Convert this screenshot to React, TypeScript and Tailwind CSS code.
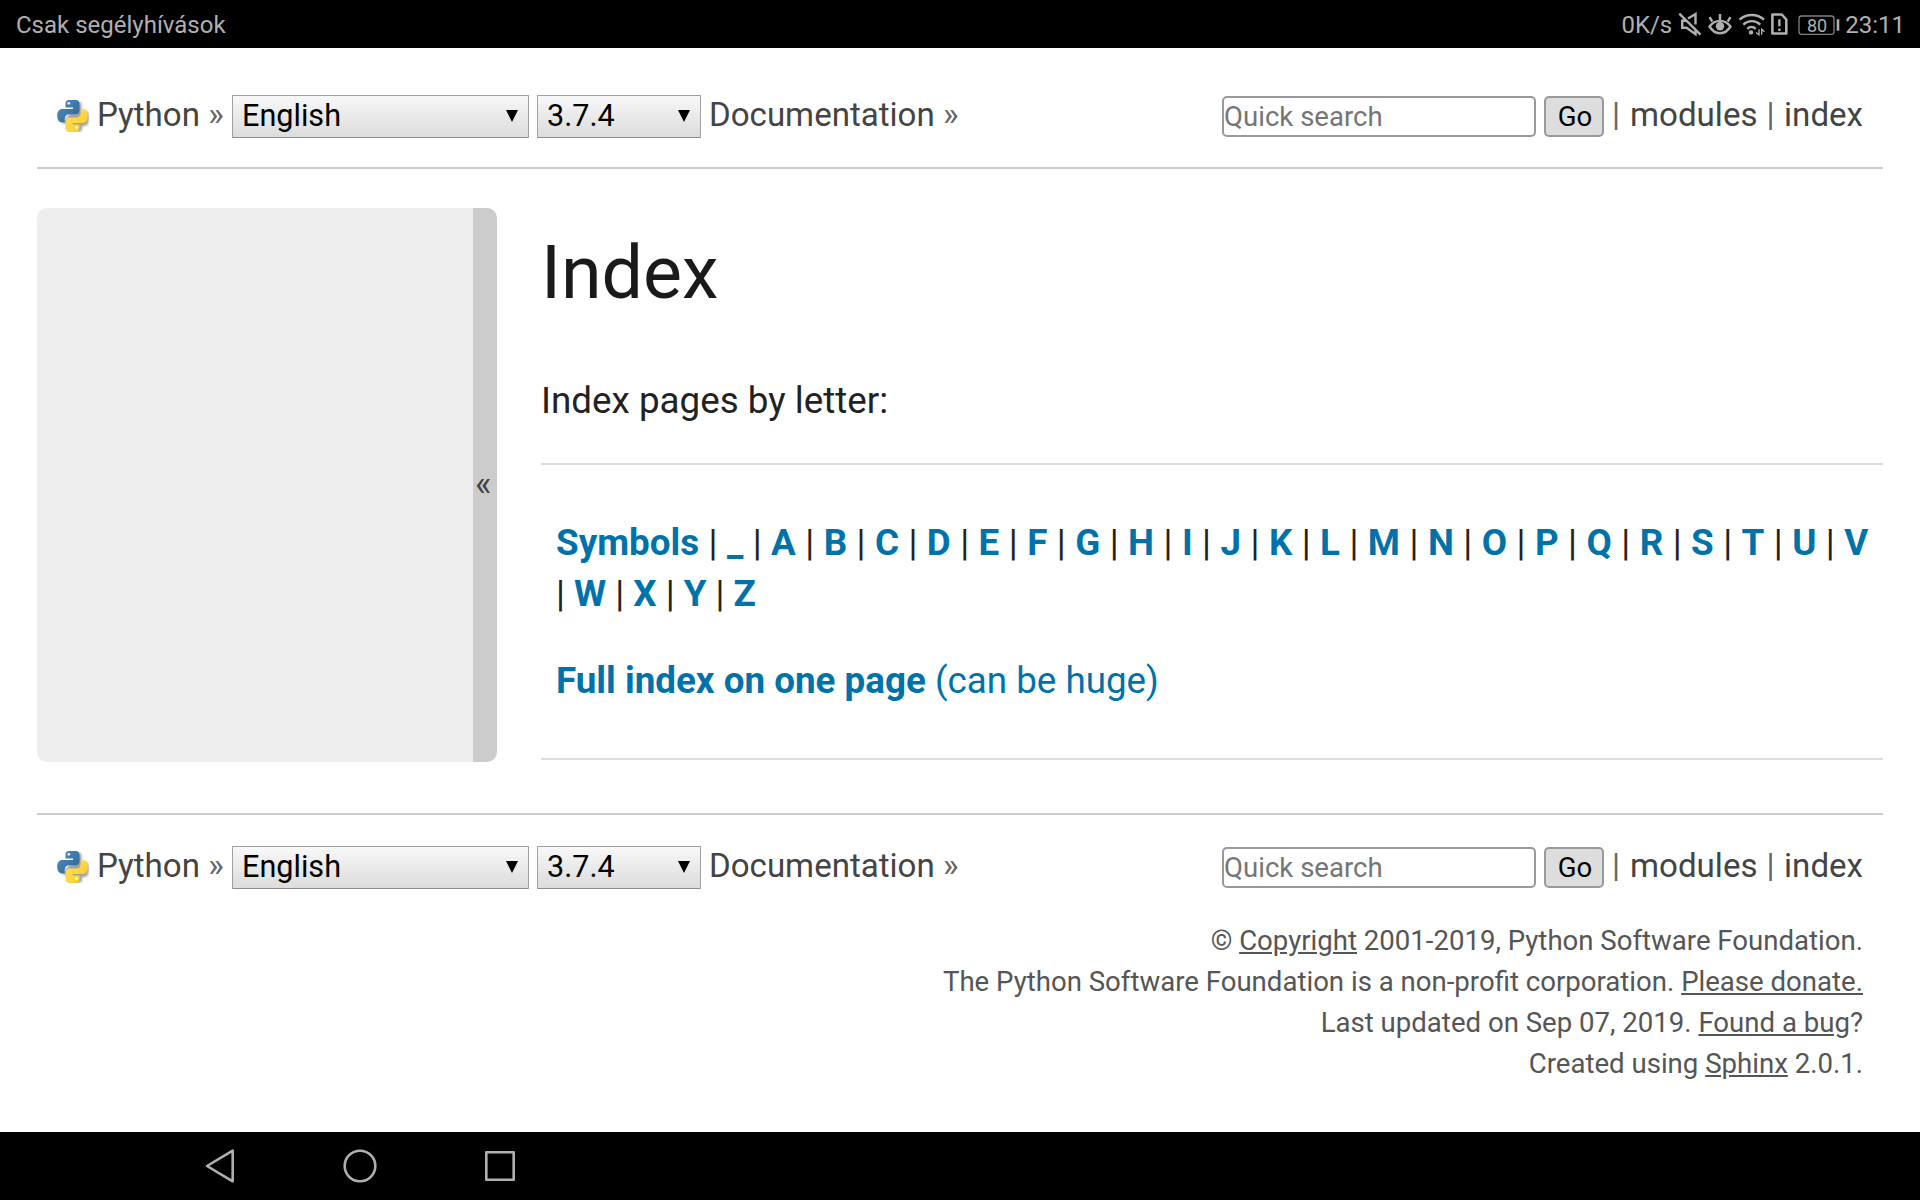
import React from 'react';

const letters = 'ABCDEFGHIJKLMNOPQRSTUVWXYZ'.split('');

function PythonLogo({ id }: { id: string }) {
  return (
    <svg width="32" height="32" viewBox="-0.500 0 32 32" className="block">
      <defs>
        <linearGradient id={id + 'b'} x1="0" y1="0" x2="1" y2="1">
          <stop offset="0" stopColor="#4f90c5" />
          <stop offset="1" stopColor="#2f6391" />
        </linearGradient>
        <linearGradient id={id + 'y'} x1="0" y1="0" x2="1" y2="1">
          <stop offset="0" stopColor="#ffe262" />
          <stop offset="1" stopColor="#fcca1c" />
        </linearGradient>
        <filter id={id + 's'} x="-20%" y="-20%" width="140%" height="140%">
          <feGaussianBlur stdDeviation="1.2" />
        </filter>
      </defs>
      <path d="M22 1.500c1.500 1 2 2 2 4v5h2c4.500 0 5.500 3 5.500 7.500 0 5-1.500 8-5 8h-2v3.500c0 2-3 3-7.500 3s-8-1.500-8-4v-5H4z" fill="#666" opacity=".6" filter={'url(#' + id + 's)'} />
      <path d="M15 -.5c-5 0-7 1.300-7 4V7.500h7.500V9H5C1.500 9-.3 11.500-.3 15.500S1.500 22.500 4.500 22.500h2.700v-3.600c0-2.800 2-4.600 4.500-4.600h6.500c2.200 0 3.800-1.700 3.800-3.900V3.500c0-2.700-2.500-4-7-4z" fill={'url(#' + id + 'b)'} />
      <path d="M15.500 32c4.500 0 6.500-1.300 6.500-4v-3.500h-6.700V23H25c3.500 0 5.300-2.500 5.300-6.800 0-4-1.500-6.700-4.500-6.700h-2.600V13c0 2.800-2 4.600-4.500 4.600h-6.500c-2.200 0-3.800 1.700-3.800 3.900V28c0 2.700 2.600 4 7.100 4z" fill={'url(#' + id + 'y)'} />
      <circle cx="11.300" cy="3.300" r="1.400" fill="#e8f1f8" />
      <circle cx="19" cy="27.500" r="1.500" fill="#fff7d0" />
    </svg>
  );
}

function Select({ label, className }: { label: string; className: string }) {
  return (
    <div className={'flex h-[43px] items-center justify-between rounded-[1px] border border-[#a0a0a0] border-b-[#8c8c8c] bg-linear-to-b from-[#f8f8f8] to-[#dcdcdc] pl-[9px] text-[30.600px] leading-[41px] text-black ' + className}>
      <span className="pb-[2px]">{label}</span>
      <svg width="12" height="12" viewBox="0 0 12 12" className="mr-[10px] mb-px">
        <path d="M0 0h12L6 12z" fill="#000" />
      </svg>
    </div>
  );
}

function NavRow({ id }: { id: string }) {
  return (
    <div className="flex h-[43px] items-center justify-between pr-5 pl-5 text-[33.100px] leading-[43px] whitespace-nowrap text-[#444]">
      <div className="flex h-[43px]">
        <div className="mt-[5px] w-[40px] shrink-0"><PythonLogo id={id} /></div>
        <div className="-mt-[2px] w-[135px]">Python <span className="text-[#666]">»</span></div>
        <Select label="English" className="w-[297px]" />
        <Select label="3.7.4" className="ml-2 w-[164px]" />
        <div className="-mt-[2px] ml-2">Documentation <span className="text-[#666]">»</span></div>
      </div>
      <div className="flex h-[43px]">
        <input placeholder="Quick search" className="mt-px h-[41px] w-[314px] rounded-[5px] border-2 border-[#999] bg-white p-0 text-[27.550px] text-black placeholder:text-[#757575] placeholder:opacity-100" />
        <button className="mt-px ml-2 h-[41px] w-[60px] rounded-[5px] border-2 border-[#999] bg-[#ddd] pl-[2px] text-[27.550px] leading-[37px] text-black">Go</button>
        <div className="-mt-[2px] ml-2 flex">
          <span className="w-[18px] text-[#666]">|</span>
          <span>modules</span>
          <span className="mr-[9.500px] ml-[9px] text-[#666]">|</span>
          <span>index</span>
        </div>
      </div>
    </div>
  );
}

function StatusBar() {
  return (
    <header className="flex h-12 items-center justify-between bg-black px-4 pt-px text-[24px] leading-[48px] text-[#b0b0b0]">
      <span>Csak segélyhívások</span>
      <div className="flex items-center">
        <span>0K/s</span>
        <svg width="232" height="48" viewBox="1672 0 232 48" className="-mt-px -mr-[59px] h-12 w-[232px]" fill="none" stroke="#b0b0b0" strokeWidth="2.400">
          <path d="M1679.300 13.600l21.200 21M1688 18.500l7.500-4.500v10.500M1695.500 30.500v3.700l-9-6.400h-4.300v-7h3.500" />
          <path d="M1709.500 26.500c5.500-7.500 15.500-7.500 21 0-5.500 9-15.500 9-21 0zM1720 20v-6M1712.300 21.500l-2.800-4.300M1727.700 21.500l2.800-4.300" />
          <circle cx="1720" cy="26.300" r="4.200" fill="#b0b0b0" stroke="none" />
          <path d="M1739.500 19.700c7-6.300 17.500-6.300 24.500 0M1743.300 24.600c5-4.600 12-4.600 17 0M1747.300 28.800c2.500-2.500 6-2.500 8.500 0" />
          <circle cx="1751" cy="32.400" r="2.200" fill="#b0b0b0" stroke="none" />
          <path d="M1759 29.300v5.500l-3-2.300M1761.700 34.800v-5.500l2.800 2.500" strokeWidth="1.400" />
          <path d="M1772.400 14.500h9.400l4.500 5V33.500h-13.900z" strokeLinejoin="round" strokeWidth="2.600" />
          <path d="M1779.400 19.300v7M1779.400 28.500v2.600" strokeWidth="2.400" />
          <rect x="1799" y="16" width="35" height="18.300" rx="2.500" stroke="#808080" strokeWidth="1.300" />
          <path d="M1838 19.300v11.400" strokeWidth="2.600" />
          <text x="1807" y="31.500" fontSize="18" fill="#b0b0b0" stroke="none">80</text>
        </svg>
        <span className="-mr-px">23:11</span>
      </div>
    </header>
  );
}

export default function App() {
  return (
    <div className="flex h-[1200px] w-[1920px] flex-col overflow-hidden bg-white font-['Roboto',sans-serif] text-[36.780px] leading-[51px] text-[#222]">
      <StatusBar />
      <div className="flex-1 px-[37px] pt-[47px]">
        <NavRow id="top" />
        <div className="mt-[29px] h-[2px] bg-[#ccc]" />
        <div className="mt-[39px] flex h-[554px]">
          <aside className="flex w-[460px] overflow-hidden rounded-[10px] bg-[#eee]">
            <div className="ml-auto flex w-6 items-center bg-[#ccc] pb-px pl-[2px] text-[35px] text-[#444]">«</div>
          </aside>
          <main className="ml-11 flex-1">
            <h1 className="pt-[15px] text-[73.560px] leading-[100px] text-[#1a1a1a]">Index</h1>
            <p className="mt-[52px]">Index pages by letter:</p>
            <div className="mt-[37px] border-y-2 border-[#ddd] pt-[52px] pb-[52px] pl-[15px] whitespace-nowrap">
              <p className="[word-spacing:0.310px]">
                <b className="text-[#0072aa]">Symbols</b> | <b className="text-[#0072aa]">_</b>
                {letters.slice(0, 22).map((l) => <React.Fragment key={l}> | <b className="text-[#0072aa]">{l}</b></React.Fragment>)}
              </p>
              <p className="[word-spacing:-0.080px]">
                {letters.slice(22).map((l) => <React.Fragment key={l}>| <b className="text-[#0072aa]">{l}</b> </React.Fragment>)}
              </p>
              <p className="mt-9 text-[#0072aa]"><b>Full index on one page</b> (can be huge)</p>
            </div>
          </main>
        </div>
        <div className="mt-[51px] h-[2px] bg-[#ccc]" />
        <div className="mt-[31px]"><NavRow id="bottom" /></div>
        <footer className="mt-[31px] pr-5 text-right text-[27.580px] leading-[41px] text-[#555]">
          <p>© <a className="underline">Copyright</a> 2001-2019, Python Software Foundation.</p>
          <p>The Python Software Foundation is a non-profit corporation. <a className="underline">Please donate.</a></p>
          <p>Last updated on Sep 07, 2019. <a className="underline">Found a bug</a>?</p>
          <p>Created using <a className="underline">Sphinx</a> 2.0.1.</p>
        </footer>
      </div>
      <nav className="flex h-[68px] items-center gap-[106px] bg-black pl-[203px]">
        <svg width="34" height="36" viewBox="0 0 34 36" fill="none" stroke="#b0b0b0" strokeWidth="2.600" strokeLinejoin="round"><path d="M4 18L29.700 2.700v30.600z" /></svg>
        <svg width="34" height="34" viewBox="0 0 34 34" fill="none" stroke="#b0b0b0" strokeWidth="2.600"><circle cx="17" cy="17" r="15.300" /></svg>
        <svg width="34" height="34" viewBox="0 0 34 34" fill="none" stroke="#b0b0b0" strokeWidth="2.600" strokeLinejoin="round"><path d="M3.300 3.300h27.400v27.400H3.300z" /></svg>
      </nav>
    </div>
  );
}
